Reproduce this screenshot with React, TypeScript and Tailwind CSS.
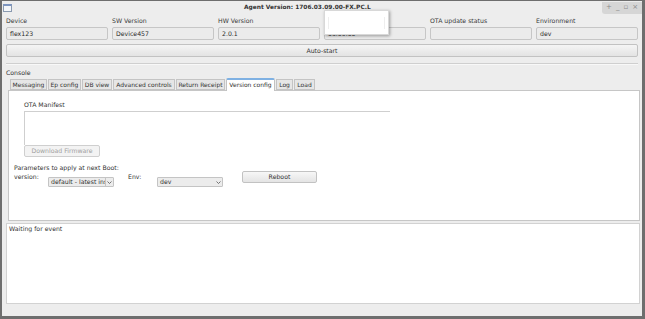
import React from "react";

const font = { fontFamily: '"DejaVu Sans", "Liberation Sans", sans-serif' };

function Field({ label, value }: { label: string; value: string }) {
  return (
    <div className="flex flex-col w-[102px]">
      <div className="h-[13px] text-[6.2px] leading-[13px] text-[#3a3a3a] whitespace-nowrap">{label}</div>
      <div className="h-[13px] border border-[#c6c6c6] rounded-[2px] bg-[#ebebeb] text-[6.2px] leading-[11px] pl-[3px] text-[#2c2c2c] whitespace-nowrap">
        {value}
      </div>
    </div>
  );
}

function Tab({ label, w, active }: { label: string; w: number; active?: boolean }) {
  return (
    <div
      style={{ width: w }}
      className={
        active
          ? "h-[13px] -mb-[1px] bg-white border border-[#c2c2c2] border-t-2 border-t-[#7fb1e3] border-b-0 rounded-t-[2px] text-[6px] leading-[9px] text-center text-[#333] whitespace-nowrap overflow-hidden"
          : "h-[11px] mt-[1px] bg-[#e6e6e6] border border-[#c4c4c4] text-[6px] leading-[9px] text-center text-[#333] whitespace-nowrap overflow-hidden"
      }
    >
      {label}
    </div>
  );
}

export default function App() {
  return (
    <div
      style={font}
      className="relative w-[645px] h-[319px] bg-[#ededed] border-t border-l-2 border-r-[3px] border-b-[3px] border-[#6e6e6e] flex flex-col overflow-hidden"
    >
      {/* title bar */}
      <div className="h-[13px] flex items-center relative">
        <div className="ml-[1px] w-[9px] h-[8px] border border-[#8a9ab0] bg-[#f4f6f9] border-t-2 border-t-[#7d95c0]" />
        <div className="ml-[232px] text-[5.9px] font-bold text-[#333] leading-[13px] whitespace-nowrap">
          Agent Version: 1706.03.09.00-FX.PC.L
        </div>
        <div className="ml-auto h-[12px] w-[40px] rounded-bl-[3px] bg-[#d6d6d6] flex items-center justify-around px-[2px] text-[7px] text-[#8b8b8b] leading-none">
          <span>+</span>
          <span>_</span>
          <span>▫</span>
          <span>×</span>
        </div>
      </div>

      {/* fields */}
      <div className="flex gap-[4px] pl-[4px]">
        <Field label="Device" value="flex123" />
        <Field label="SW Version" value="Device457" />
        <Field label="HW Version" value="2.0.1" />
        <Field label="" value="03.09.00" />
        <Field label="OTA update status" value="" />
        <Field label="Environment" value="dev" />
      </div>

      {/* auto-start */}
      <div className="mx-[4px] mt-[4px] h-[13px] border border-[#c2c2c2] rounded-[2px] bg-gradient-to-b from-[#f5f5f5] to-[#e3e3e3] text-[6.2px] leading-[11px] text-center text-[#333]">
        Auto-start
      </div>

      {/* separator */}
      <div className="mx-[4px] mt-[6px] h-[2px] border-t border-[#cfcfcf] border-b border-b-[#f8f8f8]" />

      <div className="pl-[4px] mt-[3px] text-[6.2px] leading-[9px] text-[#333]">Console</div>

      {/* tabs */}
      <div className="flex ml-[8px] mt-[1px] items-end relative z-10 gap-[1px]">
        <Tab label="Messaging" w={37} />
        <Tab label="Ep config" w={33} />
        <Tab label="DB view" w={30} />
        <Tab label="Advanced controls" w={62} />
        <Tab label="Return Receipt" w={49} />
        <Tab label="Version config" w={49} active />
        <Tab label="Log" w={17} />
        <Tab label="Load" w={21} />
      </div>

      {/* panel */}
      <div className="ml-[6px] mr-[2px] h-[131px] bg-white border border-[#c6c6c6] flex flex-col">
        <div className="ml-[15px] mt-[9px] text-[6.2px] leading-[9px] text-[#333]">OTA Manifest</div>
        <div className="ml-[15px] mt-[2px] w-[366px] h-[34px] border-t border-l border-[#cfcfcf]" />
        <div className="ml-[15px] w-[76px] h-[12px] border border-[#cfcfcf] rounded-[2px] bg-[#f3f3f3] text-[6.2px] leading-[10px] text-center text-[#a0a0a0] whitespace-nowrap">
          Download Firmware
        </div>
        <div className="ml-[5px] mt-[6px] text-[6.2px] leading-[9px] text-[#333] whitespace-nowrap">
          Parameters to apply at next Boot:
        </div>
        <div className="flex ml-[5px]">
          <div className="w-[34px] text-[6.2px] leading-[9px] text-[#333]">version:</div>
          <div className="mt-[5px] w-[66px] h-[10px] border border-[#c4c4c4] bg-[#ececec] rounded-[1px] flex items-center text-[6.2px] text-[#333]">
            <span className="pl-[2px] flex-1 overflow-hidden whitespace-nowrap leading-[8px]">default - latest ins</span>
            <span className="w-[8px] h-full border-l border-[#c4c4c4] flex items-center justify-center">
              <svg width="5" height="3" viewBox="0 0 5 3"><path d="M0.5 0.5 L2.5 2.5 L4.5 0.5" fill="none" stroke="#555" strokeWidth="0.8" /></svg>
            </span>
          </div>
          <div className="ml-[14px] w-[29px] text-[6.2px] leading-[9px] text-[#333]">Env:</div>
          <div className="mt-[5px] w-[66px] h-[10px] border border-[#c4c4c4] bg-[#ececec] rounded-[1px] flex items-center text-[6.2px] text-[#333]">
            <span className="pl-[2px] flex-1 leading-[8px]">dev</span>
            <span className="w-[8px] h-full flex items-center justify-center">
              <svg width="5" height="3" viewBox="0 0 5 3"><path d="M0.5 0.5 L2.5 2.5 L4.5 0.5" fill="none" stroke="#555" strokeWidth="0.8" /></svg>
            </span>
          </div>
          <div className="ml-[19px] -mt-[1px] w-[75px] h-[12px] border border-[#c2c2c2] rounded-[2px] bg-gradient-to-b from-[#f7f7f7] to-[#e4e4e4] text-[6.2px] leading-[10px] text-center text-[#333]">
            Reboot
          </div>
        </div>
      </div>

      {/* log */}
      <div className="ml-[4px] mr-[2px] mt-[2px] h-[81px] bg-white border border-[#d2d2d2] px-[2px] text-[6.2px] leading-[10px] text-[#333]">
        Waiting for event
      </div>

      {/* popup overlay */}
      <div className="absolute left-[322px] top-[9px] w-[65px] h-[25px] bg-white shadow-[1px_1px_3px_rgba(0,0,0,0.35)] border border-[#d8d8d8] flex items-center px-[3px]">
        <div className="w-full h-[12px] border-l border-r border-[#eeeeee]" />
      </div>
    </div>
  );
}
